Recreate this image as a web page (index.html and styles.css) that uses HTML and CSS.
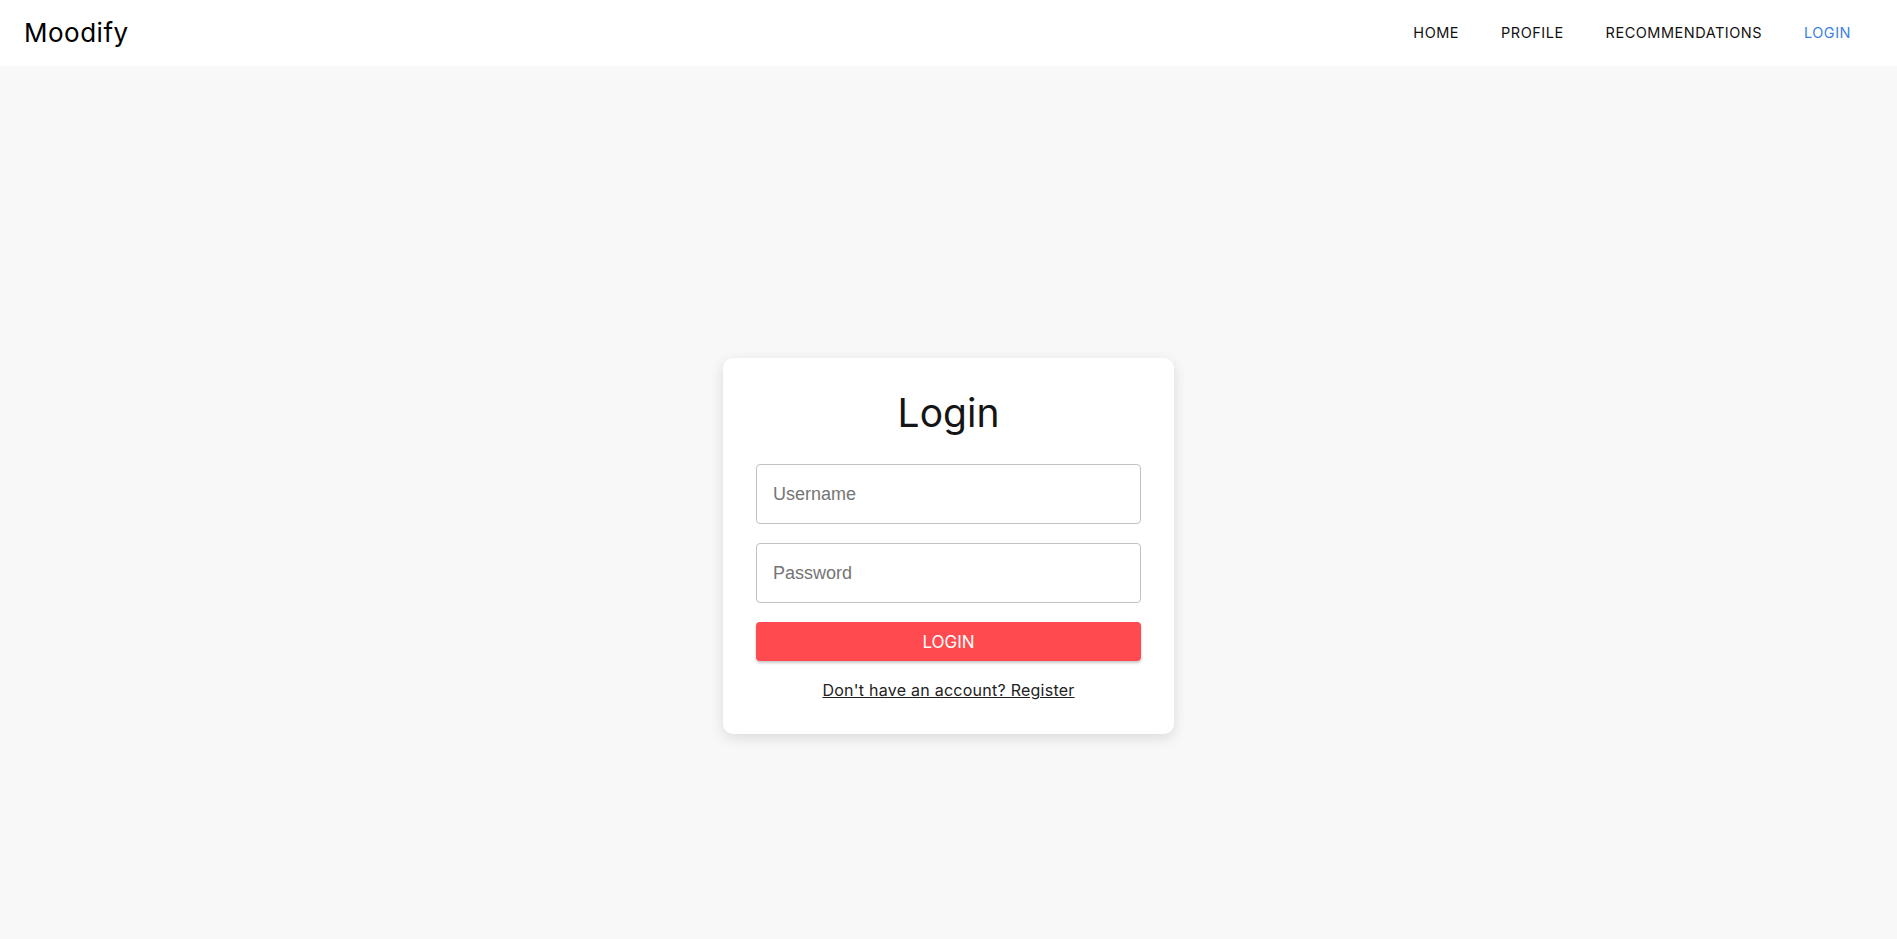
FILE: index.html
```html
<!DOCTYPE html>
<html lang="en">
<head>
<meta charset="utf-8">
<title>Moodify</title>
<link rel="stylesheet" href="styles.css">
</head>
<body>
<header class="topbar">
  <div class="brand">Moodify</div>
  <nav class="nav">
    <a class="nav-link" href="#">HOME</a>
    <a class="nav-link" href="#">PROFILE</a>
    <a class="nav-link" href="#">RECOMMENDATIONS</a>
    <a class="nav-link active" href="#">LOGIN</a>
  </nav>
</header>
<main class="main">
  <form class="card">
    <h1 class="title">Login</h1>
    <input class="field" type="text" placeholder="Username">
    <input class="field" type="password" placeholder="Password">
    <button class="btn" type="button">LOGIN</button>
    <a class="register" href="#">Don't have an account? Register</a>
  </form>
</main>
</body>
</html>
```
FILE: styles.css
```css
* { box-sizing: border-box; }
html, body { margin: 0; padding: 0; }
body {
  background: #f8f8f8;
  font-family: "Inter", "Open Sans", sans-serif;
  color: #111;
  min-height: 939px;
}
.topbar {
  height: 66px;
  background: #fff;
  display: flex;
  align-items: center;
  justify-content: space-between;
  padding: 0 25px 2px 24px;
}
.brand {
  font-size: 26px;
  font-weight: 400;
  color: #000;
  letter-spacing: 0.5px;
}
.nav { display: flex; align-items: center; }
.nav-link {
  font-size: 14.5px;
  color: #111;
  text-decoration: none;
  padding: 0 21px;
  letter-spacing: 0.5px;
}
.nav-link.active { color: #3d7fe2; }
.main {
  display: flex;
  justify-content: center;
  padding-top: 292px;
}
.card {
  width: 451px;
  background: #fff;
  border-radius: 10px;
  box-shadow: 0 4px 14px rgba(0,0,0,0.12);
  padding: 31px 33px 34px;
  display: flex;
  flex-direction: column;
  align-items: stretch;
}
.title {
  margin: 0 0 27px;
  font-size: 39px;
  font-weight: 400;
  line-height: 48px;
  text-align: center;
  color: #151515;
}
.field {
  height: 60px;
  border: 1px solid #c2c2c2;
  border-radius: 4px;
  padding: 0 16px;
  font-family: "Liberation Sans", Arial, sans-serif;
  font-size: 18px;
  color: #222;
  margin-bottom: 19px;
  background: #fff;
  outline: none;
}
.field::placeholder { color: #757575; }
.btn {
  height: 39px;
  border: none;
  border-radius: 4px;
  background: #ff4b4f;
  color: #fff;
  font-family: "Inter", "Open Sans", sans-serif;
  font-size: 17px;
  box-shadow: 0 2px 3px rgba(0,0,0,0.22);
  cursor: pointer;
}
.register {
  margin-top: 19px;
  align-self: center;
  font-size: 16px;
  color: #222;
  text-decoration: underline;
  line-height: 20px;
  letter-spacing: 0.25px;
}
```
